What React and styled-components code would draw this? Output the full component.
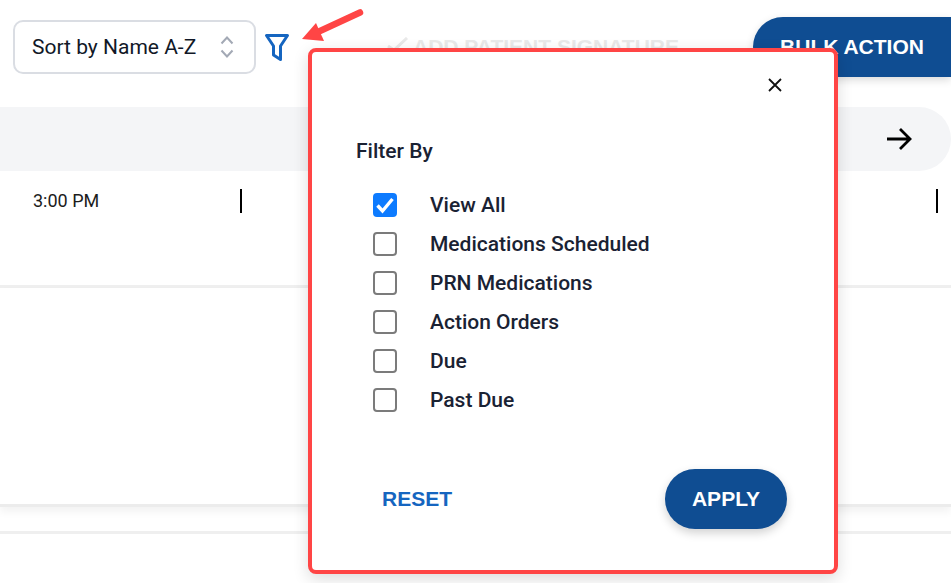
import styled, { createGlobalStyle } from 'styled-components'

const GlobalStyle = createGlobalStyle`
  html, body {
    margin: 0;
    padding: 0;
    background: #fff;
    font-family: 'Roboto', sans-serif;
  }
`

const Page = styled.div`
  position: relative;
  width: 951px;
  height: 583px;
  overflow: hidden;
  background: #fff;
`

// TOOLBAR
const Toolbar = styled.div`
  display: flex;
  align-items: center;
  height: 60px;
  padding: 17px 0 0 13px;
`

const SortSelect = styled.div`
  box-sizing: border-box;
  width: 243px;
  height: 54px;
  display: flex;
  align-items: center;
  justify-content: space-between;
  padding: 0 20px 0 17px;
  border: 2px solid #dadde3;
  border-radius: 10px;
  font-size: 21px;
  color: #111827;
`

const SortChevrons = styled.svg`
  width: 14px;
  height: 24px;
  fill: none;
  stroke: #a3a9b5;
  stroke-width: 2;
`

const FilterIcon = styled.svg`
  width: 26px;
  height: 30px;
  margin-left: 8px;
  fill: none;
  stroke: #1565c0;
  stroke-width: 3;
  stroke-linejoin: round;
`

const SignatureAction = styled.div`
  display: flex;
  align-items: center;
  gap: 4px;
  margin-left: 97px;
  font-family: 'Liberation Sans', Arial, sans-serif;
  font-weight: 700;
  font-size: 21px;
  color: #e9e9e9;
  white-space: nowrap;
`

const BulkButton = styled.div`
  margin-left: auto;
  width: 198px;
  height: 60px;
  display: flex;
  align-items: center;
  justify-content: center;
  background: #0f4d92;
  color: #fff;
  border-radius: 30px 0 0 30px;
  font-family: 'Liberation Sans', Arial, sans-serif;
  font-weight: 700;
  font-size: 21px;
  box-shadow: 0 3px 8px rgba(0, 0, 0, 0.15);
`

// SCHEDULE
const TimeBand = styled.div`
  height: 64px;
  margin-top: 30px;
  display: flex;
  align-items: center;
  justify-content: flex-end;
  padding-right: 39px;
  background: #f4f5f7;
  border-radius: 0 32px 32px 0;
`

const TimeRow = styled.div`
  height: 117px;
  box-sizing: border-box;
  padding: 18px 13px 0 33px;
  display: flex;
  justify-content: space-between;
  border-bottom: 3px solid #efefef;
`

const TimeCell = styled.div`
  width: 209px;
  height: 24px;
  display: flex;
  align-items: center;
  justify-content: space-between;
  font-size: 18px;
  color: #1c1c1c;
`

const TimeLabel = styled.span`
  margin-bottom: 2px;
`

const Tick = styled.span`
  display: block;
  width: 2px;
  height: 24px;
  background: #000;
`

const EmptyRow = styled.div`
  height: 219px;
  box-sizing: border-box;
  border-bottom: 3px solid #ececec;
  box-shadow: 0 5px 8px rgba(0, 0, 0, 0.05);
`

const LastRow = styled.div`
  margin-top: 24px;
  border-top: 3px solid #efefef;
`

// ANNOTATION
const Annotation = styled.svg`
  position: absolute;
  left: 295px;
  top: 4px;
  width: 75px;
  height: 42px;
`

// POPUP
const Popup = styled.div`
  position: absolute;
  left: 308px;
  top: 48px;
  width: 530px;
  height: 526px;
  box-sizing: border-box;
  display: flex;
  flex-direction: column;
  padding: 0 47px 41px 44px;
  background: #fff;
  border: 4px solid #ff4545;
  border-radius: 8px;
  box-shadow: 0 5px 16px rgba(0, 0, 0, 0.14);
`

const CloseRow = styled.div`
  display: flex;
  justify-content: flex-end;
  padding: 26px 5px 0 0;
`

const CloseIcon = styled.svg`
  width: 14px;
  height: 14px;
  stroke: #111;
  stroke-width: 1.8;
`

const PopupTitle = styled.div`
  margin-top: 47px;
  font-size: 21px;
  line-height: 24px;
  font-weight: 500;
  color: #1a2233;
`

const OptionList = styled.div`
  display: flex;
  flex-direction: column;
  gap: 15px;
  margin-top: 30px;
  padding-left: 17px;
`

const Option = styled.div`
  display: flex;
  align-items: center;
  gap: 33px;
  height: 24px;
  font-size: 21px;
  font-weight: 500;
  color: #1a2233;
`

const CheckBox = styled.span`
  box-sizing: border-box;
  width: 24px;
  height: 24px;
  display: flex;
  align-items: center;
  justify-content: center;
  border-radius: 4px;
  background: ${p => (p.$checked ? '#0d7bff' : '#fff')};
  border: ${p => (p.$checked ? 'none' : '2px solid #7b7b7b')};
`

const CheckMark = styled.svg`
  width: 18px;
  height: 18px;
  fill: none;
  stroke: #fff;
  stroke-width: 3.4;
`

const PopupFooter = styled.div`
  margin-top: auto;
  display: flex;
  align-items: center;
  justify-content: space-between;
  padding-left: 26px;
`

const ResetLink = styled.div`
  font-family: 'Liberation Sans', Arial, sans-serif;
  font-weight: 700;
  font-size: 21px;
  color: #1565c0;
`

const ApplyButton = styled.div`
  width: 122px;
  height: 60px;
  display: flex;
  align-items: center;
  justify-content: center;
  background: #0f4d92;
  color: #fff;
  border-radius: 30px;
  font-family: 'Liberation Sans', Arial, sans-serif;
  font-weight: 700;
  font-size: 21px;
  box-shadow: 0 4px 10px rgba(0, 0, 0, 0.18);
`

const filters = [
  { label: 'View All', checked: true },
  { label: 'Medications Scheduled' },
  { label: 'PRN Medications' },
  { label: 'Action Orders' },
  { label: 'Due' },
  { label: 'Past Due' },
]

const App = () => {
  return (
    <Page>
      <GlobalStyle />
      <Toolbar>
        <SortSelect>
          Sort by Name A-Z
          <SortChevrons viewBox='0 0 14 24'>
            <path d='M1.5 8.5 7 2.5l5.5 6' />
            <path d='M1.5 15.5 7 21.5l5.5-6' />
          </SortChevrons>
        </SortSelect>
        <FilterIcon viewBox='0 0 26 30'>
          <path d='M2.5 3.5h21l-7 10.5v13.5L9.5 23V14z' />
        </FilterIcon>
        <SignatureAction>
          <svg width='22' height='20' viewBox='0 0 22 20' fill='none' stroke='#e9e9e9' strokeWidth='3'>
            <path d='M1 9l6 4L20 1' />
          </svg>
          ADD PATIENT SIGNATURE
        </SignatureAction>
        <BulkButton>BULK ACTION</BulkButton>
      </Toolbar>

      <TimeBand>
        <svg width='26' height='24' viewBox='0 0 26 24' fill='none' stroke='#000' strokeWidth='2.8'>
          <path d='M1 12h22M14 2l10 10-10 10' />
        </svg>
      </TimeBand>
      <TimeRow>
        <TimeCell><TimeLabel>3:00 PM</TimeLabel><Tick /></TimeCell>
        <Tick />
      </TimeRow>
      <EmptyRow />
      <LastRow />

      <Annotation viewBox='0 0 75 42'>
        <path d='M65 8.5 25 27' stroke='#ff4545' strokeWidth='6.5' strokeLinecap='round' />
        <path d='M7 35 21 19l8 18z' fill='#ff4545' />
      </Annotation>

      <Popup>
        <CloseRow>
          <CloseIcon viewBox='0 0 14 14'>
            <path d='M1 1l12 12M13 1 1 13' />
          </CloseIcon>
        </CloseRow>
        <PopupTitle>Filter By</PopupTitle>
        <OptionList>
          {filters.map(item => (
            <Option key={item.label}>
              <CheckBox $checked={item.checked}>
                {item.checked && (
                  <CheckMark viewBox='0 0 18 18'>
                    <path d='M1.5 9.5l5 5.5L16.5 3' />
                  </CheckMark>
                )}
              </CheckBox>
              {item.label}
            </Option>
          ))}
        </OptionList>
        <PopupFooter>
          <ResetLink>RESET</ResetLink>
          <ApplyButton>APPLY</ApplyButton>
        </PopupFooter>
      </Popup>
    </Page>
  )
}

export default App
